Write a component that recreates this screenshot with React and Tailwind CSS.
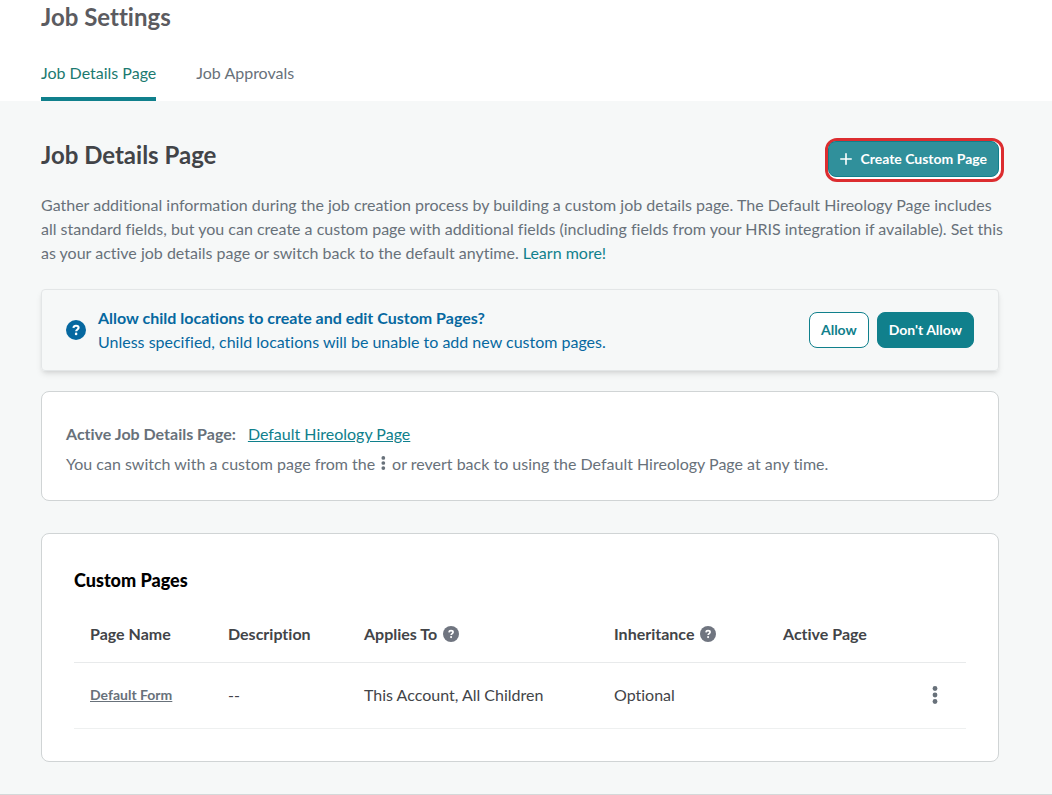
import clsx from 'clsx'

const tabs = [
  { label: 'Job Details Page', active: true },
  { label: 'Job Approvals', active: false },
]

const columns = [
  { label: 'Page Name', width: 'w-[138px]' },
  { label: 'Description', width: 'w-[136px]' },
  { label: 'Applies To', width: 'w-[250px]', help: true },
  { label: 'Inheritance', width: 'w-[169px]', help: true },
  { label: 'Active Page', width: '' },
]

function QuestionIcon({ className }) {
  return (
    <svg className={className} viewBox="0 0 20 20" aria-hidden="true">
      <circle cx="10" cy="10" r="10" fill="currentColor" />
      <path d="M7.4 7.9C7.6 6.5 8.6 5.8 10 5.8c1.5 0 2.6 0.8 2.6 2 0 1.7-2.4 1.7-2.4 3.5" fill="none" stroke="white" strokeWidth="2.1" />
      <circle cx="10.1" cy="13.9" r="1.3" fill="white" />
    </svg>
  )
}

function DotsIcon({ className }) {
  return (
    <svg className={className} viewBox="0 0 6 18" fill="currentColor" aria-hidden="true">
      <circle cx="3" cy="2.5" r="2.4" />
      <circle cx="3" cy="9" r="2.4" />
      <circle cx="3" cy="15.5" r="2.4" />
    </svg>
  )
}

export default function App() {
  return (
    <div className="bg-[#f6f8f8] text-base leading-6 text-[#68717a] font-['Lato',sans-serif] [font-variant-ligatures:none]">
      <header className="bg-white pl-[41px] pr-[53px] pt-px">
        <h1 className="text-2xl leading-8 font-bold text-[#5b5b60]">Job Settings</h1>
        <nav className="flex gap-10 pt-7">
          {tabs.map((tab) => (
            <a
              key={tab.label}
              href="#"
              className={clsx(
                'border-b-4 pb-3',
                tab.active ? 'border-[#10808c] text-[#1b7a70]' : 'border-transparent'
              )}
            >
              {tab.label}
            </a>
          ))}
        </nav>
      </header>

      <main className="border-b border-[#d5d8d9] pl-[41px] pr-[53px] pt-[37px] pb-8">
        <div className="flex items-start justify-between">
          <h2 className="pt-px text-2xl leading-8 font-bold text-[#424448]">Job Details Page</h2>
          {/* Highlighted call to action */}
          <div className="-mr-[5px] rounded-xl border-3 border-[#dc2d30] bg-white pr-0.5 pb-0.5">
            <button className="flex h-9 items-center gap-2 rounded-lg border border-[#10808c] bg-[#30909b] px-[11px] text-sm font-bold text-white">
              <svg className="size-3" viewBox="0 0 12 12" fill="none" stroke="currentColor" strokeWidth="1.6" strokeLinecap="round" aria-hidden="true">
                <path d="M6 0.8v10.4M0.8 6h10.4" />
              </svg>
              Create Custom Page
            </button>
          </div>
        </div>

        <p className="-mr-2 mt-[11px]">
          Gather additional information during the job creation process by building a custom job details page. The
          Default Hireology Page includes all standard fields, but you can create a custom page with additional fields
          (including fields from your HRIS integration if available). Set this as your active job details page or
          switch back to the default anytime. <a href="#" className="text-[#10808c]">Learn more!</a>
        </p>

        <section className="mt-6 flex items-center gap-3 rounded-sm border border-[#e3e6e7] px-6 py-4 text-[#0668a0] shadow-md">
          <QuestionIcon className="size-5 shrink-0" />
          <div className="flex-1">
            <h3 className="font-bold">Allow child locations to create and edit Custom Pages?</h3>
            <p>Unless specified, child locations will be unable to add new custom pages.</p>
          </div>
          <div className="flex gap-2 text-sm font-bold">
            <button className="h-9 rounded-lg border border-[#10808c] bg-white px-[11px] text-[#10808c]">Allow</button>
            <button className="h-9 rounded-lg border border-[#10808c] bg-[#10808c] px-[11px] text-white">Don't Allow</button>
          </div>
        </section>

        <section className="mt-5 rounded-lg border border-[#d0d4d5] bg-white px-6 pt-[30px] pb-6">
          <div className="flex gap-3">
            <h3 className="font-bold">Active Job Details Page:</h3>
            <a href="#" className="text-[#10808c] underline">Default Hireology Page</a>
          </div>
          <p className="mt-1.5">
            You can switch with a custom page from the{' '}
            <DotsIcon className="mx-0.5 inline h-3.5 align-baseline" /> or revert back to using the Default Hireology
            Page at any time.
          </p>
        </section>

        <section className="mt-8 rounded-lg border border-[#d0d4d5] bg-white px-8 pt-8 pb-8">
          <h3 className="text-lg leading-7 font-black text-black">Custom Pages</h3>
          <table className="mt-3 w-full table-fixed text-left text-[#424448]">
            <thead>
              <tr className="h-14 border-b border-[#e8eaeb]">
                {columns.map((col) => (
                  <th key={col.label} className={clsx('px-4 font-bold', col.width)}>
                    <span className="flex items-center gap-1.5">
                      {col.label}
                      {col.help && <QuestionIcon className="size-4 text-[#707580]" />}
                    </span>
                  </th>
                ))}
                <th className="w-[62px]" aria-label="Actions" />
              </tr>
            </thead>
            <tbody>
              <tr className="h-[66px] border-b border-[#eef0f0]">
                <td className="px-4">
                  <a href="#" className="block text-sm leading-6 font-bold text-[#68717a] underline">Default Form</a>
                </td>
                <td className="px-4">--</td>
                <td className="px-4">This Account, All Children</td>
                <td className="px-4">Optional</td>
                <td />
                <td>
                  <button className="flex h-9 w-full items-center justify-center text-[#68717a]" aria-label="Page actions">
                    <DotsIcon className="h-[18px]" />
                  </button>
                </td>
              </tr>
            </tbody>
          </table>
        </section>
      </main>
    </div>
  )
}
